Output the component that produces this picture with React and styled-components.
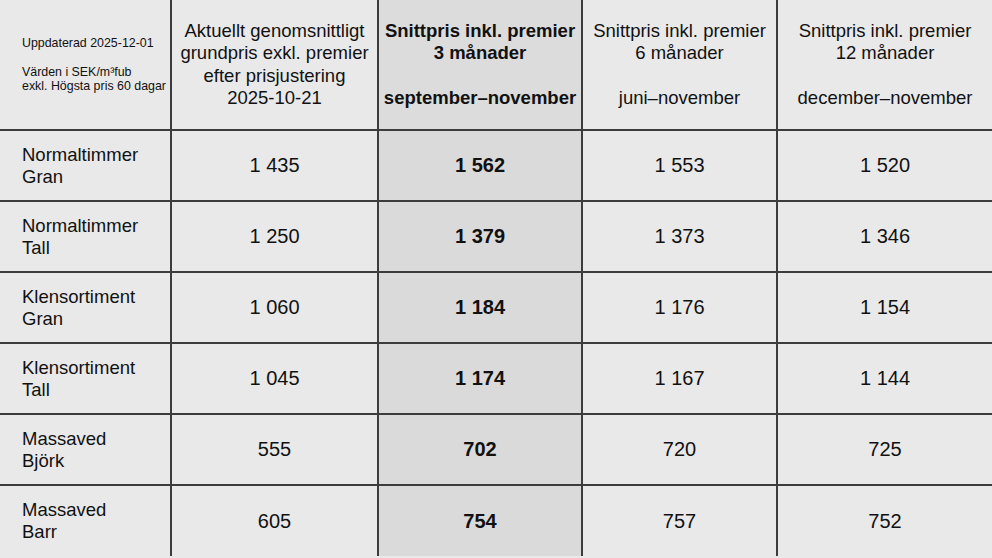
import React from 'react';
import styled, { createGlobalStyle } from 'styled-components';

const GlobalStyle = createGlobalStyle`
  html, body {
    margin: 0;
    padding: 0;
    background: #e9e9e9;
    font-family: "Liberation Sans", Arial, sans-serif;
    color: #111;
  }
`;

const Table = styled.table`
  width: 992px;
  table-layout: fixed;
  border-collapse: collapse;
  border-style: hidden;
  background: #e9e9e9;
`;

const HeadCell = styled.th`
  height: 129px;
  padding: 0 2px;
  border: 2px solid #3c3c3c;
  font-size: 18.5px;
  line-height: 22.5px;
  font-weight: ${p => (p.$bold ? 700 : 400)};
  text-align: center;
  vertical-align: middle;
  white-space: nowrap;
  background: ${p => (p.$hl ? '#dcdcdc' : 'transparent')};
`;

const NoteCell = styled.th`
  height: 129px;
  padding: 0 0 0 22px;
  border: 2px solid #3c3c3c;
  font-size: 12.4px;
  line-height: 14.5px;
  font-weight: 400;
  text-align: left;
  vertical-align: middle;
  white-space: nowrap;
`;

const LabelCell = styled.td`
  height: ${p => p.$h}px;
  padding: 0 0 0 22px;
  border: 2px solid #3c3c3c;
  font-size: 18.5px;
  line-height: 22px;
  vertical-align: middle;
`;

const ValueCell = styled.td`
  border: 2px solid #3c3c3c;
  font-size: 20px;
  text-align: center;
  vertical-align: middle;
  font-weight: ${p => (p.$bold ? 700 : 400)};
  background: ${p => (p.$hl ? '#dadada' : 'transparent')};
`;

const rows = [
  ['Normaltimmer', 'Gran', '1 435', '1 562', '1 553', '1 520'],
  ['Normaltimmer', 'Tall', '1 250', '1 379', '1 373', '1 346'],
  ['Klensortiment', 'Gran', '1 060', '1 184', '1 176', '1 154'],
  ['Klensortiment', 'Tall', '1 045', '1 174', '1 167', '1 144'],
  ['Massaved', 'Björk', '555', '702', '720', '725'],
  ['Massaved', 'Barr', '605', '754', '757', '752'],
];

export default function App() {
  return (
    <>
      <GlobalStyle />
      <Table>
        <colgroup>
          <col style={{ width: 171 }} />
          <col style={{ width: 207 }} />
          <col style={{ width: 204 }} />
          <col style={{ width: 195 }} />
          <col style={{ width: 215 }} />
        </colgroup>
        <thead>
          <tr>
            <NoteCell>
              Uppdaterad 2025-12-01
              <br />
              <br />
              Värden i SEK/m³fub
              <br />
              exkl. Högsta pris 60 dagar
            </NoteCell>
            <HeadCell>
              Aktuellt genomsnittligt
              <br />
              grundpris exkl. premier
              <br />
              efter prisjustering
              <br />
              2025-10-21
            </HeadCell>
            <HeadCell $bold $hl>
              Snittpris inkl. premier
              <br />
              3 månader
              <br />
              <br />
              september–november
            </HeadCell>
            <HeadCell>
              Snittpris inkl. premier
              <br />
              6 månader
              <br />
              <br />
              juni–november
            </HeadCell>
            <HeadCell>
              Snittpris inkl. premier
              <br />
              12 månader
              <br />
              <br />
              december–november
            </HeadCell>
          </tr>
        </thead>
        <tbody>
          {rows.map(([a, b, v1, v2, v3, v4], i) => (
            <tr key={i}>
              <LabelCell $h={i === rows.length - 1 ? 70 : 69}>
                {a}
                <br />
                {b}
              </LabelCell>
              <ValueCell>{v1}</ValueCell>
              <ValueCell $bold $hl>{v2}</ValueCell>
              <ValueCell>{v3}</ValueCell>
              <ValueCell>{v4}</ValueCell>
            </tr>
          ))}
        </tbody>
      </Table>
    </>
  );
}
